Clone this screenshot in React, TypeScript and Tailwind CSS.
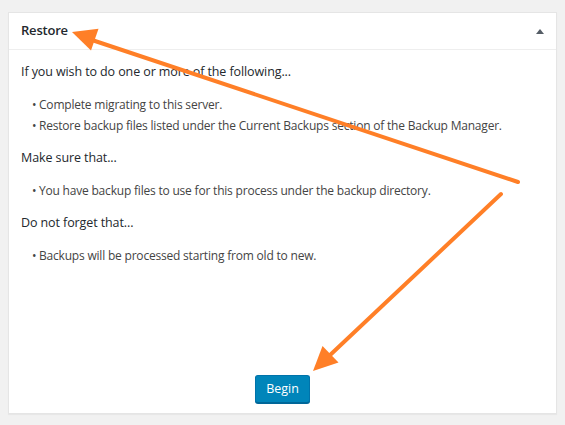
import React from 'react';

const sections: { title: string; items: string[] }[] = [
  {
    title: 'If you wish to do one or more of the following...',
    items: [
      'Complete migrating to this server.',
      'Restore backup files listed under the Current Backups section of the Backup Manager.',
    ],
  },
  {
    title: 'Make sure that...',
    items: ['You have backup files to use for this process under the backup directory.'],
  },
  {
    title: 'Do not forget that...',
    items: ['Backups will be processed starting from old to new.'],
  },
];

const Arrows: React.FC = () => (
  <svg
    className="absolute left-0 top-0 pointer-events-none"
    width="565"
    height="425"
    viewBox="0 0 565 425"
  >
    <g stroke="#ff7f27" strokeWidth="4" strokeLinecap="round" fill="none">
      <line x1="518" y1="182" x2="92" y2="40" />
      <line x1="501" y1="194" x2="328" y2="357" />
    </g>
    <g fill="#ff7f27">
      <polygon points="72,32 98.5,28.8 91,50.5" />
      <polygon points="313,371 338.5,362.5 322.5,346" />
    </g>
  </svg>
);

const App: React.FC = () => {
  return (
    <div
      className="relative w-[565px] h-[425px] bg-[#f1f1f1] overflow-hidden text-[#444]"
      style={{ fontFamily: '"Open Sans", "Noto Sans", sans-serif' }}
    >
      <div className="pt-[12px] pl-[8px]">
        <div className="w-[549px] h-[402px] bg-white border border-[#e5e5e5] shadow-[0_1px_1px_rgba(0,0,0,0.04)] flex flex-col">
          <div className="h-[37px] border-b border-[#eee] flex items-center justify-between pl-[12px] pr-[12px]">
            <h2 className="text-[13px] font-semibold tracking-[-0.2px] text-[#23282d]">Restore</h2>
            <span className="w-0 h-0 border-l-[4px] border-r-[4px] border-b-[5px] border-l-transparent border-r-transparent border-b-[#555d66]" />
          </div>

          <div className="flex-1 px-[12px] pt-[11px] text-[12px] leading-[21px] tracking-[-0.2px]">
            {sections.map((s, i) => (
              <div key={i}>
                <p className="h-[21px] text-[12.5px] tracking-[-0.1px] text-[#23282d]">{s.title}</p>
                <ul className="mt-[12px] mb-[11px] pl-[11px]">
                  {s.items.map((item) => (
                    <li key={item} className="h-[21px]">
                      <span className="inline-block w-[7px]">•</span>
                      {item}
                    </li>
                  ))}
                </ul>
              </div>
            ))}
          </div>

          <div className="flex justify-center pb-[10px]">
            <button className="h-[28px] px-[10px] rounded-[3px] bg-[#0085ba] border border-[#0073aa] border-b-[#006799] shadow-[0_1px_0_#006799] text-white text-[12.5px] leading-[26px]">
              Begin
            </button>
          </div>
        </div>
      </div>
      <Arrows />
    </div>
  );
};

export default App;
